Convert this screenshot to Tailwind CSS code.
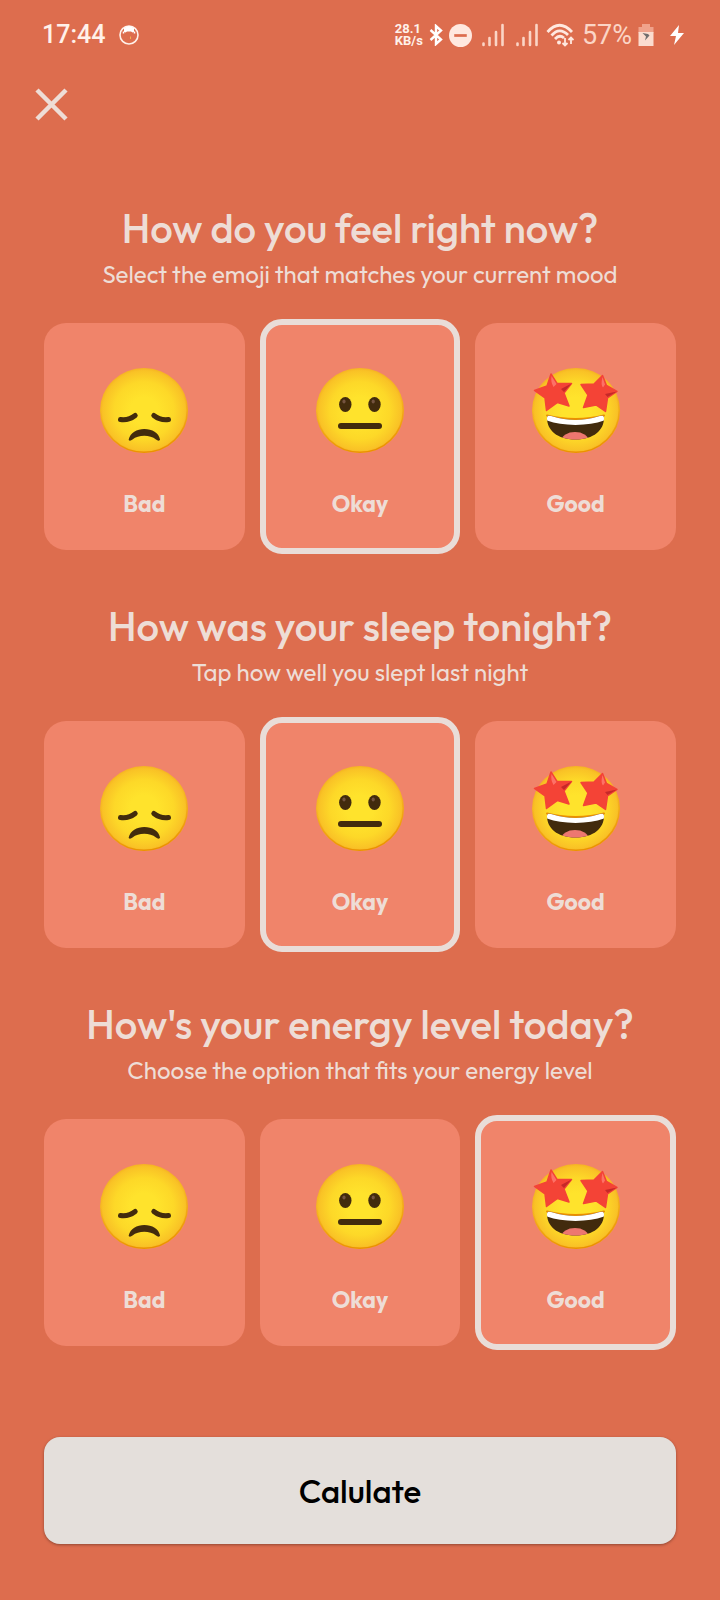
<!DOCTYPE html>
<html lang="en">
<head>
<meta charset="utf-8">
<meta name="viewport" content="width=device-width, initial-scale=1">
<title>Mood check-in</title>
<script src="https://cdn.jsdelivr.net/npm/@tailwindcss/browser@4"></script>
</head>
<body class="min-h-screen bg-[#dd6d4e] font-[Outfit,Lato,sans-serif] text-[#eeddd6]">

<svg class="absolute size-0" aria-hidden="true">
  <defs>
    <radialGradient id="face" cx="50%" cy="50%" r="52%">
      <stop offset="0.3" stop-color="#ffe32c"/>
      <stop offset="0.65" stop-color="#fdd828"/>
      <stop offset="0.9" stop-color="#f9c226"/>
      <stop offset="1" stop-color="#f3a91f"/>
    </radialGradient>
    <linearGradient id="rim" x1="0.4" y1="0" x2="0.6" y2="1">
      <stop offset="0.4" stop-color="#eb8f00" stop-opacity="0"/>
      <stop offset="1" stop-color="#eb8f00"/>
    </linearGradient>
    <clipPath id="grin"><path d="M15 50C15 47 18 47.500 21 48.500C35 53 52 53 66 48.500C69 47.500 72 47 72 50C72 62 62 71.500 43.500 71.500C25 71.500 15 62 15 50Z"/></clipPath>
    <symbol id="base" viewBox="0 0 88 85">
      <ellipse cx="44" cy="42.500" rx="44" ry="42.500" fill="url(#face)"/>
      <ellipse cx="44" cy="42.500" rx="43.200" ry="41.700" fill="none" stroke="url(#rim)" stroke-width="1.500"/>
    </symbol>
    <symbol id="bad" viewBox="0 0 88 85">
      <use href="#base" width="88" height="85"/>
      <path d="M20.500 51.500Q29 52.500 35.200 47.500M53.800 47.500Q60 52.500 68.500 51.500" fill="none" stroke="#422b0d" stroke-width="5" stroke-linecap="round"/>
      <path d="M28.700 71.500C30 65 37 61 44.300 61C52 61 59 65 60 71.500C60 73 57.500 73 56 71.500C50 66.500 38.500 66.500 32.500 71.500C31 73 28.500 73 28.700 71.500Z" fill="#422b0d"/>
    </symbol>
    <symbol id="okay" viewBox="0 0 88 85">
      <use href="#base" width="88" height="85"/>
      <g fill="#422b0d"><ellipse cx="29.300" cy="36.500" rx="6.200" ry="7.500"/><ellipse cx="58.500" cy="36.500" rx="6.200" ry="7.500"/><rect x="22" y="55" width="44" height="6" rx="3"/></g>
      <g fill="#745340"><ellipse cx="28" cy="33.500" rx="1.600" ry="2"/><ellipse cx="57.200" cy="33.500" rx="1.600" ry="2"/></g>
    </symbol>
    <symbol id="good" viewBox="0 0 88 85">
      <use href="#base" width="88" height="85"/>
      <path d="M15 47.500C32 52 55 52 72 47.500" fill="none" stroke="#eb8f00" stroke-width="2" stroke-linecap="round"/>
      <g clip-path="url(#grin)">
        <path d="M10 44H78V76H10Z" fill="#422b0d"/>
        <ellipse cx="43" cy="72.500" rx="13.500" ry="8.500" fill="#ed7770"/>
        <path d="M12 44H75V51.500C66 55 56 57 43.500 57C31 57 21 55 12 51.500Z" fill="#fff"/>
      </g>
      <g fill="#f44336" stroke="#f44336" stroke-width="1.500" stroke-linejoin="round">
        <path d="M19 6L25 15.500L39.500 15.500L32 25L37 38L25.500 34.500L14.500 42.500L13 30L2.500 22.500L15 18Z"/>
        <path d="M70.500 7.500L74.500 17.500L85 23.500L75.500 30L73.500 43.500L64 37L51.500 39.500L56 27L49 16.500L62 16Z"/>
      </g>
      <path d="M39.500 15.500L32 24L29 21ZM85 23.500L75.500 29L73 26Z" fill="#c62828"/>
      <path d="M19.500 8L24.500 16L21.500 19Q18.500 14 19.500 8ZM70.500 9L73 16.500L71 19.500Q68.500 17 70.500 9Z" fill="#ff7d74" opacity="0.8"/>
    </symbol>
    <symbol id="signal" viewBox="0 0 22 24">
      <path d="M1.500 20.500V22M7.500 15V22M14 9V22M20.500 2V22" stroke="#fbd5c6" stroke-width="2.600" stroke-linecap="round"/>
    </symbol>
  </defs>
</svg>

<header>
  <div class="flex h-[70px] items-center justify-between pr-9 pl-[42px] font-[Roboto,sans-serif] text-[#fff1ea]">
    <div class="flex items-center gap-3.5">
      <time class="text-[25px] leading-8 font-medium">17:44</time>
      <svg class="size-5" viewBox="0 0 20 20" fill="none" aria-hidden="true">
        <circle cx="10" cy="10" r="9" stroke="#fff1ea" stroke-width="1.600"/>
        <path d="M5 3Q10 -1 15 3V7L13.500 7.500L12 6.500H8L6.500 7.500L5 7Z" fill="#fff"/>
        <path d="M4.500 6.500V8.500M15.500 6.500V8.500" stroke="#fff" stroke-width="1.500"/>
        <path d="M11.500 11.500V14" stroke="#f5b04c"/>
      </svg>
    </div>
    <div class="flex items-center">
      <div class="text-[13px] leading-3 font-bold">28.1<br>KB/s</div>
      <svg class="ml-1.5 h-[22px] w-3.5" viewBox="0 0 14 22" fill="none" stroke="#fff" stroke-width="2.400" aria-hidden="true"><path d="M1.500 6L12 15.500L7 20V2L12 6.500L1.500 16"/></svg>
      <svg class="ml-1.5 size-[23px]" viewBox="0 0 22 22" aria-hidden="true"><circle cx="11" cy="11" r="11" fill="#ffe8df"/><path d="M5 11H17" stroke="#dd6d4e" stroke-width="2.600"/></svg>
      <svg class="ml-2.5 h-6 w-[22px]" aria-hidden="true"><use href="#signal"/></svg>
      <svg class="ml-3 h-6 w-[22px]" aria-hidden="true"><use href="#signal"/></svg>
      <svg class="ml-2 h-6 w-7" viewBox="0 0 28 24" fill="none" stroke="#ffe8df" aria-hidden="true">
        <path d="M1.500 9Q13.500 -4.500 26 9M5.500 12.500Q13.500 3.500 22 12M9 16Q13.500 11 18 15" stroke-width="2.800"/>
        <circle cx="13" cy="19.500" r="2" fill="#ffe8df" stroke="none"/>
        <path d="M19 15V22.500M16.500 20L19 22.500L21.500 20M25 21V14.500M22.500 17L25 14.500L27.500 17" stroke-width="1.800"/>
      </svg>
      <span class="ml-2 text-[27px] leading-8 text-[#fbd5c6]">57%</span>
      <svg class="ml-1.5 h-6 w-4" viewBox="0 0 16 24" aria-hidden="true"><path d="M4 1H12V4H15.500V10H.5V4H4Z" fill="#f0a28b"/><path d="M.5 9H15.500V23H.5Z" fill="#fbdccf"/><path d="M4.500 10L10 11L11.500 12.500L7 17.500L8 13.500Z" fill="#706d6d"/></svg>
      <svg class="ml-4 h-5 w-3.5" viewBox="0 0 14 20" aria-hidden="true"><path d="M9 0L0 11H6L4 20L14 8H8Z" fill="#fff"/></svg>
    </div>
  </div>
  <div class="px-[34px] pt-[17px]">
    <button type="button" aria-label="Close" class="block">
      <svg class="size-[34px]" viewBox="0 0 34 34" fill="none" stroke="#eeddd6" stroke-width="4.500" aria-hidden="true"><path d="M3 3L32 32M32 3L3 32"/></svg>
    </button>
  </div>
</header>

<form class="px-11 pt-[83px] pb-14 text-center">
  <div class="flex flex-col gap-12">
    <section role="radiogroup" aria-labelledby="q-mood">
      <h1 id="q-mood" class="text-[40px] leading-12 font-medium">How do you feel right now?</h1>
      <p class="mt-2 text-2xl leading-7">Select the emoji that matches your current mood</p>
      <div class="mt-[31px] grid grid-cols-3 items-center gap-[15px]">
        <label class="flex cursor-pointer flex-col items-center rounded-[22px] border-[#e9ddd8] bg-[#f0846a] pt-[45px] pb-8 has-checked:border-6 has-checked:pt-[43px] has-checked:pb-[30px]">
          <input type="radio" name="mood" value="bad" class="sr-only">
          <svg class="h-[85px] w-[88px]" aria-hidden="true"><use href="#bad"/></svg>
          <span class="mt-[37px] text-[23px] leading-7 font-bold">Bad</span>
        </label>
        <label class="flex cursor-pointer flex-col items-center rounded-[22px] border-[#e9ddd8] bg-[#f0846a] pt-[45px] pb-8 has-checked:border-6 has-checked:pt-[43px] has-checked:pb-[30px]">
          <input type="radio" name="mood" value="okay" class="sr-only" checked>
          <svg class="h-[85px] w-[88px]" aria-hidden="true"><use href="#okay"/></svg>
          <span class="mt-[37px] text-[23px] leading-7 font-bold">Okay</span>
        </label>
        <label class="flex cursor-pointer flex-col items-center rounded-[22px] border-[#e9ddd8] bg-[#f0846a] pt-[45px] pb-8 has-checked:border-6 has-checked:pt-[43px] has-checked:pb-[30px]">
          <input type="radio" name="mood" value="good" class="sr-only">
          <svg class="h-[85px] w-[88px]" aria-hidden="true"><use href="#good"/></svg>
          <span class="mt-[37px] text-[23px] leading-7 font-bold">Good</span>
        </label>
      </div>
    </section>

    <section role="radiogroup" aria-labelledby="q-sleep">
      <h2 id="q-sleep" class="text-[40px] leading-12 font-medium">How was your sleep tonight?</h2>
      <p class="mt-2 text-2xl leading-7">Tap how well you slept last night</p>
      <div class="mt-[31px] grid grid-cols-3 items-center gap-[15px]">
        <label class="flex cursor-pointer flex-col items-center rounded-[22px] border-[#e9ddd8] bg-[#f0846a] pt-[45px] pb-8 has-checked:border-6 has-checked:pt-[43px] has-checked:pb-[30px]">
          <input type="radio" name="sleep" value="bad" class="sr-only">
          <svg class="h-[85px] w-[88px]" aria-hidden="true"><use href="#bad"/></svg>
          <span class="mt-[37px] text-[23px] leading-7 font-bold">Bad</span>
        </label>
        <label class="flex cursor-pointer flex-col items-center rounded-[22px] border-[#e9ddd8] bg-[#f0846a] pt-[45px] pb-8 has-checked:border-6 has-checked:pt-[43px] has-checked:pb-[30px]">
          <input type="radio" name="sleep" value="okay" class="sr-only" checked>
          <svg class="h-[85px] w-[88px]" aria-hidden="true"><use href="#okay"/></svg>
          <span class="mt-[37px] text-[23px] leading-7 font-bold">Okay</span>
        </label>
        <label class="flex cursor-pointer flex-col items-center rounded-[22px] border-[#e9ddd8] bg-[#f0846a] pt-[45px] pb-8 has-checked:border-6 has-checked:pt-[43px] has-checked:pb-[30px]">
          <input type="radio" name="sleep" value="good" class="sr-only">
          <svg class="h-[85px] w-[88px]" aria-hidden="true"><use href="#good"/></svg>
          <span class="mt-[37px] text-[23px] leading-7 font-bold">Good</span>
        </label>
      </div>
    </section>

    <section role="radiogroup" aria-labelledby="q-energy">
      <h2 id="q-energy" class="text-[40px] leading-12 font-medium">How's your energy level today?</h2>
      <p class="mt-2 text-2xl leading-7">Choose the option that fits your energy level</p>
      <div class="mt-[31px] grid grid-cols-3 items-center gap-[15px]">
        <label class="flex cursor-pointer flex-col items-center rounded-[22px] border-[#e9ddd8] bg-[#f0846a] pt-[45px] pb-8 has-checked:border-6 has-checked:pt-[43px] has-checked:pb-[30px]">
          <input type="radio" name="energy" value="bad" class="sr-only">
          <svg class="h-[85px] w-[88px]" aria-hidden="true"><use href="#bad"/></svg>
          <span class="mt-[37px] text-[23px] leading-7 font-bold">Bad</span>
        </label>
        <label class="flex cursor-pointer flex-col items-center rounded-[22px] border-[#e9ddd8] bg-[#f0846a] pt-[45px] pb-8 has-checked:border-6 has-checked:pt-[43px] has-checked:pb-[30px]">
          <input type="radio" name="energy" value="okay" class="sr-only">
          <svg class="h-[85px] w-[88px]" aria-hidden="true"><use href="#okay"/></svg>
          <span class="mt-[37px] text-[23px] leading-7 font-bold">Okay</span>
        </label>
        <label class="flex cursor-pointer flex-col items-center rounded-[22px] border-[#e9ddd8] bg-[#f0846a] pt-[45px] pb-8 has-checked:border-6 has-checked:pt-[43px] has-checked:pb-[30px]">
          <input type="radio" name="energy" value="good" class="sr-only" checked>
          <svg class="h-[85px] w-[88px]" aria-hidden="true"><use href="#good"/></svg>
          <span class="mt-[37px] text-[23px] leading-7 font-bold">Good</span>
        </label>
      </div>
    </section>
  </div>

  <button type="button" class="mt-[87px] w-full rounded-2xl bg-[#e4dfdb] pt-[34px] pb-[33px] text-[33px] leading-10 font-medium text-black shadow-[0_1px_3px_rgba(0,0,0,0.35)]">Calulate</button>
</form>
</body>
</html>
